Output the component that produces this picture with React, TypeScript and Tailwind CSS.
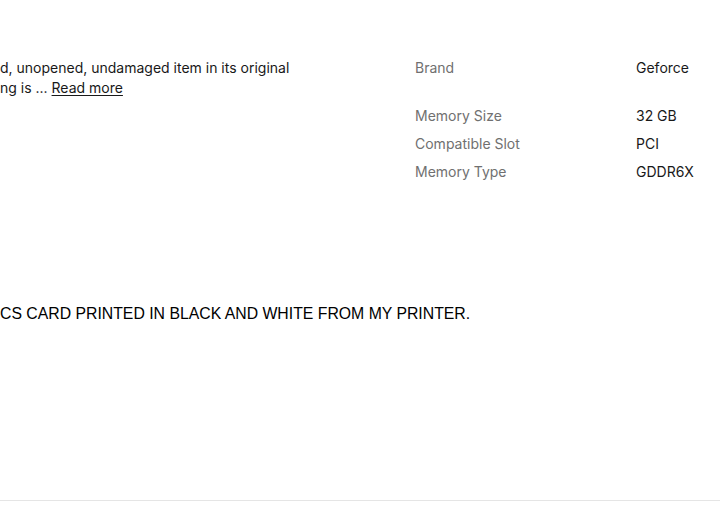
import React from "react";

interface Spec {
  label: string;
  value: string;
}

const specs: Spec[] = [
  { label: "Memory Size", value: "32 GB" },
  { label: "Compatible Slot", value: "PCI" },
  { label: "Memory Type", value: "GDDR6X" },
];

const SpecRow = ({ label, value }: Spec) => (
  <div className="flex h-5 items-center">
    <div className="w-[415px] shrink-0" />
    <div className="w-[221px] shrink-0 text-[#707070]">{label}</div>
    <div className="text-[#191919]">{value}</div>
  </div>
);

const App = () => {
  return (
    <div className="relative h-[511px] w-[720px] overflow-hidden bg-white">
      <div className="flex flex-col gap-2 pt-[58px] font-['Inter',sans-serif] text-sm leading-5">
        <div className="flex">
          <div className="w-[415px] shrink-0 overflow-hidden whitespace-nowrap text-[#191919]">
            <p>d, unopened, undamaged item in its original</p>
            <p>
              ng is ...{" "}
              <a href="#" className="underline underline-offset-2">
                Read more
              </a>
            </p>
          </div>
          <div className="w-[221px] shrink-0 text-[#707070]">Brand</div>
          <div className="text-[#191919]">Geforce</div>
        </div>
        {specs.map((s) => (
          <SpecRow key={s.label} {...s} />
        ))}
      </div>

      <p className="mt-[122px] whitespace-nowrap font-['Liberation_Sans',Arial,sans-serif] text-[15.8px] leading-5 text-black">
        CS CARD PRINTED IN BLACK AND WHITE FROM MY PRINTER.
      </p>

      <div className="mt-[176px] border-t border-[#e5e5e5]" />
    </div>
  );
};

export default App;
